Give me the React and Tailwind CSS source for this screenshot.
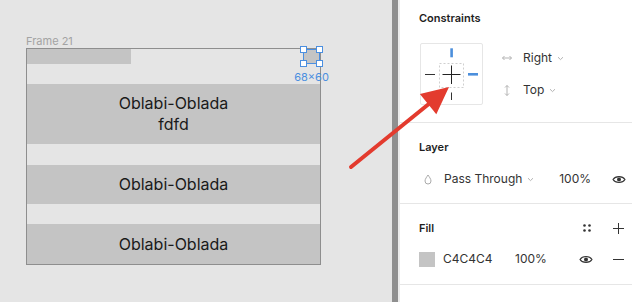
import React from "react"

function Chevron() {
    return (
        <svg width="7" height="5" viewBox="0 0 7 5" className="ml-[5px]">
            <path d="M1 1.2 L3.5 3.6 L6 1.2" fill="none" stroke="#b3b3b3" strokeWidth="1" />
        </svg>
    )
}

function Eye() {
    return (
        <svg width="14" height="9" viewBox="0 0 14 9">
            <path d="M1 4.5 C3.5 0.6 10.5 0.6 13 4.5 C10.5 8.4 3.5 8.4 1 4.5 Z" fill="none" stroke="#333" strokeWidth="1.1" />
            <circle cx="7" cy="4.5" r="2" fill="#333" />
        </svg>
    )
}

function Plus() {
    return (
        <svg width="11" height="11" viewBox="0 0 11 11">
            <path d="M0 5.5 H11 M5.5 0 V11" stroke="#333" strokeWidth="1" />
        </svg>
    )
}

function Minus() {
    return (
        <svg width="11" height="11" viewBox="0 0 11 11">
            <path d="M0 5.5 H11" stroke="#333" strokeWidth="1" />
        </svg>
    )
}

function Handle({ className }) {
    return <div className={"absolute h-[7px] w-[7px] border border-[#4b8fe0] bg-white " + className}></div>
}

function ConstraintBox() {
    return (
        <div className="ml-px h-[62px] w-[63px] rounded-[2px] border border-[#e6e6e6]">
            <svg width="61" height="60" viewBox="0 0 61 60">
                <rect x="29.3" y="4.3" width="2.6" height="9" fill="#4c8fdc" />
                <path d="M4 30.5 H14" stroke="#333" strokeWidth="1" />
                <rect x="18.5" y="19.5" width="24" height="24" fill="none" stroke="#cfcfcf" strokeWidth="1" strokeDasharray="2 2" />
                <path d="M21.5 30.5 H39.5 M30.5 21.5 V40" stroke="#222" strokeWidth="1" />
                <rect x="47" y="29" width="10" height="2.6" fill="#4c8fdc" />
                <path d="M30.5 48.5 V56" stroke="#333" strokeWidth="1" />
            </svg>
        </div>
    )
}

export default function App() {
    return (
        <div className="relative flex h-[302px] w-[632px] overflow-hidden font-['Inter',sans-serif]">
            {/* Canvas */}
            <div className="w-[392px] bg-[#e5e5e5] pl-[26px] pt-[34px]">
                <div className="text-[11px] leading-[14px] text-[#a3a3a3]">Frame 21</div>
                <div className="flex h-[217px] w-[295px] flex-col border border-[#8e8e8e] text-[16px] leading-[21px] text-[#1a1a1a]">
                    <div className="flex h-[15px] justify-between">
                        <div className="w-[104px] bg-[#c4c4c4]"></div>
                        <div className="relative w-[17px] bg-[#c4c4c4]">
                            <div className="absolute inset-0 border border-[#4b8fe0]"></div>
                            <Handle className="-left-[3px] -top-[3px]" />
                            <Handle className="-right-[3px] -top-[3px]" />
                            <Handle className="-bottom-[3px] -left-[3px]" />
                            <Handle className="-bottom-[3px] -right-[3px]" />
                            <div className="absolute left-1/2 top-[21px] -translate-x-1/2 whitespace-nowrap text-[11px] leading-[14px] text-[#4b8fe0]">
                                68×60
                            </div>
                        </div>
                    </div>
                    <div className="mt-[20px] flex h-[60px] flex-col items-center justify-center bg-[#c4c4c4]">
                        <div>Oblabi-Oblada</div>
                        <div>fdfd</div>
                    </div>
                    <div className="mt-[21px] flex h-[39px] items-center justify-center bg-[#c4c4c4]">Oblabi-Oblada</div>
                    <div className="mt-[20px] flex h-[40px] items-center justify-center bg-[#c4c4c4]">Oblabi-Oblada</div>
                </div>
            </div>

            {/* Gutter */}
            <div className="w-[6px] bg-[#8f8f8f]"></div>
            <div className="w-[2px] bg-[#ececec]"></div>

            {/* Properties panel */}
            <div className="flex-1 bg-white text-[11px] leading-[14px] text-[#333]">
                <div className="h-[123px] border-b border-[#e6e6e6] pl-[19px] pt-[11px]">
                    <div className="font-semibold text-[#1e1e1e]">Constraints</div>
                    <div className="mt-[18px] flex">
                        <ConstraintBox />
                        <div className="ml-[18px] mt-[7px] flex flex-col gap-[16px]">
                            <div className="flex h-[16px] items-center">
                                <div className="flex w-[12px] justify-center">
                                    <svg width="10" height="6" viewBox="0 0 10 6">
                                        <path d="M0.5 3 H9.5 M2.5 1 L0.5 3 L2.5 5 M7.5 1 L9.5 3 L7.5 5" fill="none" stroke="#b3b3b3" strokeWidth="1" />
                                    </svg>
                                </div>
                                <span className="ml-[10px] text-[12px]">Right</span>
                                <Chevron />
                            </div>
                            <div className="flex h-[16px] items-center">
                                <div className="flex w-[12px] justify-center">
                                    <svg width="6" height="11" viewBox="0 0 6 11">
                                        <path d="M3 0.5 V10.5 M1 2.5 L3 0.5 L5 2.5 M1 8.5 L3 10.5 L5 8.5" fill="none" stroke="#b3b3b3" strokeWidth="1" />
                                    </svg>
                                </div>
                                <span className="ml-[10px] text-[12px]">Top</span>
                                <Chevron />
                            </div>
                        </div>
                    </div>
                </div>

                <div className="h-[81px] border-b border-[#e6e6e6] pl-[19px] pr-[6px] pt-[17px]">
                    <div className="font-semibold text-[#1e1e1e]">Layer</div>
                    <div className="mt-[17px] flex h-[16px] items-center">
                        <div className="flex w-[17px] justify-center">
                            <svg width="8" height="11" viewBox="0 0 8 11">
                                <path d="M4 1 C3 2.6 1 5 1 7 A3 3 0 0 0 7 7 C7 5 5 2.6 4 1 Z" fill="none" stroke="#aaa" strokeWidth="1" />
                            </svg>
                        </div>
                        <span className="ml-[8px] text-[12px]">Pass Through</span>
                        <Chevron />
                        <span className="ml-auto text-[12px]">100%</span>
                        <div className="ml-[21px]">
                            <Eye />
                        </div>
                    </div>
                </div>

                <div className="h-[81px] border-b border-[#e6e6e6] pl-[19px] pr-[8px] pt-[17px]">
                    <div className="flex h-[14px] items-center">
                        <span className="font-semibold text-[#1e1e1e]">Fill</span>
                        <svg width="8" height="8" viewBox="0 0 8 8" className="ml-auto">
                            <circle cx="1.5" cy="1.5" r="1.3" fill="#333" />
                            <circle cx="6.5" cy="1.5" r="1.3" fill="#333" />
                            <circle cx="1.5" cy="6.5" r="1.3" fill="#333" />
                            <circle cx="6.5" cy="6.5" r="1.3" fill="#333" />
                        </svg>
                        <div className="ml-[22px]">
                            <Plus />
                        </div>
                    </div>
                    <div className="mt-[16px] flex h-[16px] items-center">
                        <div className="h-[15px] w-[16px] bg-[#c4c4c4]"></div>
                        <span className="ml-[8px] w-[72px] text-[12px]">C4C4C4</span>
                        <span className="text-[12px]">100%</span>
                        <div className="ml-auto">
                            <Eye />
                        </div>
                        <div className="ml-[20px]">
                            <Minus />
                        </div>
                    </div>
                </div>
            </div>

            {/* Annotation arrow */}
            <svg className="pointer-events-none absolute inset-0" width="632" height="302" viewBox="0 0 632 302">
                <path d="M351 167 L430 103" stroke="#e33b2e" strokeWidth="4" strokeLinecap="round" />
                <polygon points="449,87 419.9,94 436.3,114.2" fill="#e33b2e" />
            </svg>
        </div>
    )
}
